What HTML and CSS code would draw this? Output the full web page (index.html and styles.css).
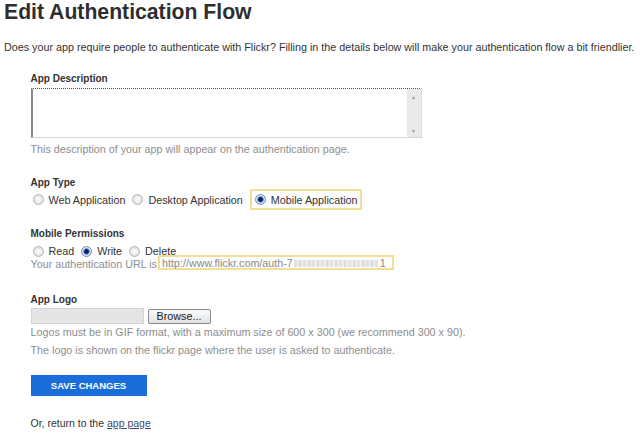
FILE: index.html
```html
<!DOCTYPE html>
<html lang="en">
<head>
<meta charset="utf-8">
<title>Edit Authentication Flow</title>
<link rel="stylesheet" href="styles.css">
</head>
<body>
<h1 class="title">Edit Authentication Flow</h1>
<p class="intro">Does your app require people to authenticate with Flickr? Filling in the details below will make your authentication flow a bit friendlier.</p>
<form class="form">
  <div class="field field-desc">
    <label class="label">App Description</label>
    <div class="textbox">
      <textarea class="textarea"></textarea>
      <div class="scrollbar"><span class="arrow">&#9650;</span><span class="arrow">&#9660;</span></div>
    </div>
    <p class="hint hint-desc">This description of your app will appear on the authentication page.</p>
  </div>

  <div class="field field-type">
    <label class="label">App Type</label>
    <div class="radio-row row-type">
      <label class="option"><input class="radio" type="radio" name="type">Web Application</label>
      <label class="option"><input class="radio" type="radio" name="type">Desktop Application</label>
      <label class="option option-hl"><input class="radio" type="radio" name="type" checked>Mobile Application</label>
    </div>
  </div>

  <div class="field field-perm">
    <label class="label">Mobile Permissions</label>
    <div class="radio-row row-perm">
      <label class="option"><input class="radio" type="radio" name="perm">Read</label>
      <label class="option"><input class="radio" type="radio" name="perm" checked>Write</label>
      <label class="option"><input class="radio" type="radio" name="perm">Delete</label>
    </div>
    <div class="url-row">
      <span class="url-label">Your authentication URL is</span>
      <span class="url-box">http://www.flickr.com/auth-7<span class="masked"></span>1</span>
    </div>
  </div>

  <div class="field field-logo">
    <label class="label">App Logo</label>
    <div class="file-row">
      <span class="file-field"></span>
      <button type="button" class="browse">Browse...</button>
    </div>
    <p class="hint hint-logo">Logos must be in GIF format, with a maximum size of 600 x 300 (we recommend 300 x 90).<br>The logo is shown on the flickr page where the user is asked to authenticate.</p>
  </div>

  <button type="button" class="save">SAVE CHANGES</button>

  <p class="return">Or, return to the <a class="link" href="#">app page</a></p>
</form>
</body>
</html>
```

FILE: styles.css
```css
html, body {
  margin: 0;
  padding: 0;
  background: #ffffff;
}
body {
  font-family: "Liberation Sans", Arial, sans-serif;
  color: #333333;
  padding-left: 4px;
  width: 636px;
  height: 440px;
  overflow: hidden;
}
.title {
  margin: 0;
  font-size: 21.2px;
  line-height: 24px;
  font-weight: bold;
  color: #2e2e2e;
}
.intro {
  margin: 16px 0 0 0;
  font-size: 10.75px;
  line-height: 14px;
  color: #333333;
  white-space: nowrap;
}
.form {
  margin: 0 0 0 26.5px;
  display: flex;
  flex-direction: column;
  align-items: flex-start;
}
.field {
  display: flex;
  flex-direction: column;
  align-items: flex-start;
}
.label {
  font-size: 10px;
  line-height: 12px;
  font-weight: bold;
  color: #333333;
}
.field-desc { margin-top: 19px; }
.field-type { margin-top: 21px; }
.field-perm { margin-top: 17.5px; }
.field-logo { margin-top: 24px; }

.textbox {
  margin-top: 3px;
  width: 391px;
  height: 50px;
  box-sizing: border-box;
  display: flex;
  border-top: 1px dotted #555555;
  border-left: 2px solid #8a8a8a;
  border-right: 1px solid #dddddd;
  border-bottom: 1px solid #d6d6d6;
}
.textarea {
  flex: 1;
  border: 0;
  margin: 0;
  padding: 0;
  resize: none;
  outline: none;
  background: #ffffff;
}
.scrollbar {
  width: 14px;
  display: flex;
  flex-direction: column;
  justify-content: space-between;
  align-items: center;
  padding: 5px 0 3px;
  background-color: #f3f3f3;
  background-image: radial-gradient(#dcdcdc 0.6px, transparent 0.8px);
  background-size: 2px 2px;
}
.arrow {
  font-size: 5px;
  line-height: 6px;
  color: #9a9a9a;
}
.hint {
  margin: 0;
  font-size: 10.75px;
  color: #8e8e8e;
}
.hint-desc {
  margin-top: 4px;
  line-height: 14px;
}
.hint-logo {
  line-height: 17.5px;
}

.radio-row {
  display: flex;
  align-items: center;
  font-size: 10.75px;
  color: #333333;
}
.row-type {
  height: 21px;
  margin-top: 0;
}
.row-perm {
  height: 14px;
  margin-top: 4.5px;
}
.option {
  display: inline-flex;
  align-items: center;
  margin-right: 5px;
  line-height: 12px;
  white-space: nowrap;
}
.option-hl {
  margin-left: 2px;
  height: 21px;
  box-sizing: border-box;
  padding: 0 3px 0 1px;
  border: 2px solid #f2df93;
}
.radio {
  -webkit-appearance: none;
  appearance: none;
  width: 11px;
  height: 11px;
  margin: 0 5px 0 2px;
  border-radius: 50%;
  border: 1px solid #b5b5b5;
  box-sizing: border-box;
  background: radial-gradient(circle at 50% 50%, #ffffff 0, #eeeeee 45%, #d0d0d0 100%);
}
.radio:checked {
  border-color: #7a8ba8;
  background: radial-gradient(circle at 50% 50%, #0b1f55 0, #0b1f55 1.6px, #2e6bd1 2.6px, #d8e2f2 3.6px, #e9e9e9 100%);
}

.url-row {
  display: flex;
  align-items: center;
  margin-top: -3px;
  font-size: 10.75px;
  color: #8e8e8e;
  line-height: 11px;
}
.url-label {
  padding-top: 3px;
  margin-right: 1px;
}
.url-box {
  display: inline-flex;
  align-items: center;
  height: 15px;
  box-sizing: border-box;
  padding: 2px 6px 0 2px;
  border: 2px solid #f2df93;
  color: #8a8a8a;
}
.masked {
  display: inline-block;
  width: 84px;
  height: 7px;
  margin: 0 2px 0 1px;
  background-image: repeating-linear-gradient(90deg, #e2e2e2 0 3px, #f0f0f0 3px 5px, #d9d9d9 5px 7px, #ececec 7px 9px);
}

.file-row {
  display: flex;
  align-items: center;
  margin-top: 2px;
  height: 16px;
}
.file-field {
  display: inline-block;
  width: 113px;
  height: 16px;
  box-sizing: border-box;
  border: 1px solid #d4d4d4;
  background-color: #ececec;
  background-image: radial-gradient(#dadada 0.6px, transparent 0.8px);
  background-size: 2px 2px;
}
.browse {
  margin: 0 0 0 4px;
  width: 63px;
  height: 15px;
  padding: 0;
  box-sizing: border-box;
  font-family: "Liberation Sans", Arial, sans-serif;
  font-size: 10.75px;
  line-height: 12px;
  color: #222222;
  border: 1px solid #8a8a8a;
  border-radius: 2px;
  background: linear-gradient(#fbfbfb, #e2e2e2);
}

.save {
  margin-top: 16px;
  width: 116px;
  height: 21px;
  padding: 0;
  border: 0;
  background: #1b6ddb;
  color: #ffffff;
  font-family: "Liberation Sans", Arial, sans-serif;
  font-size: 9.5px;
  font-weight: bold;
  letter-spacing: 0;
}

.return {
  margin: 19.5px 0 0 0;
  font-size: 10.5px;
  line-height: 14px;
  color: #333333;
}
.link {
  color: #3d4a66;
  text-decoration: underline;
}
```
